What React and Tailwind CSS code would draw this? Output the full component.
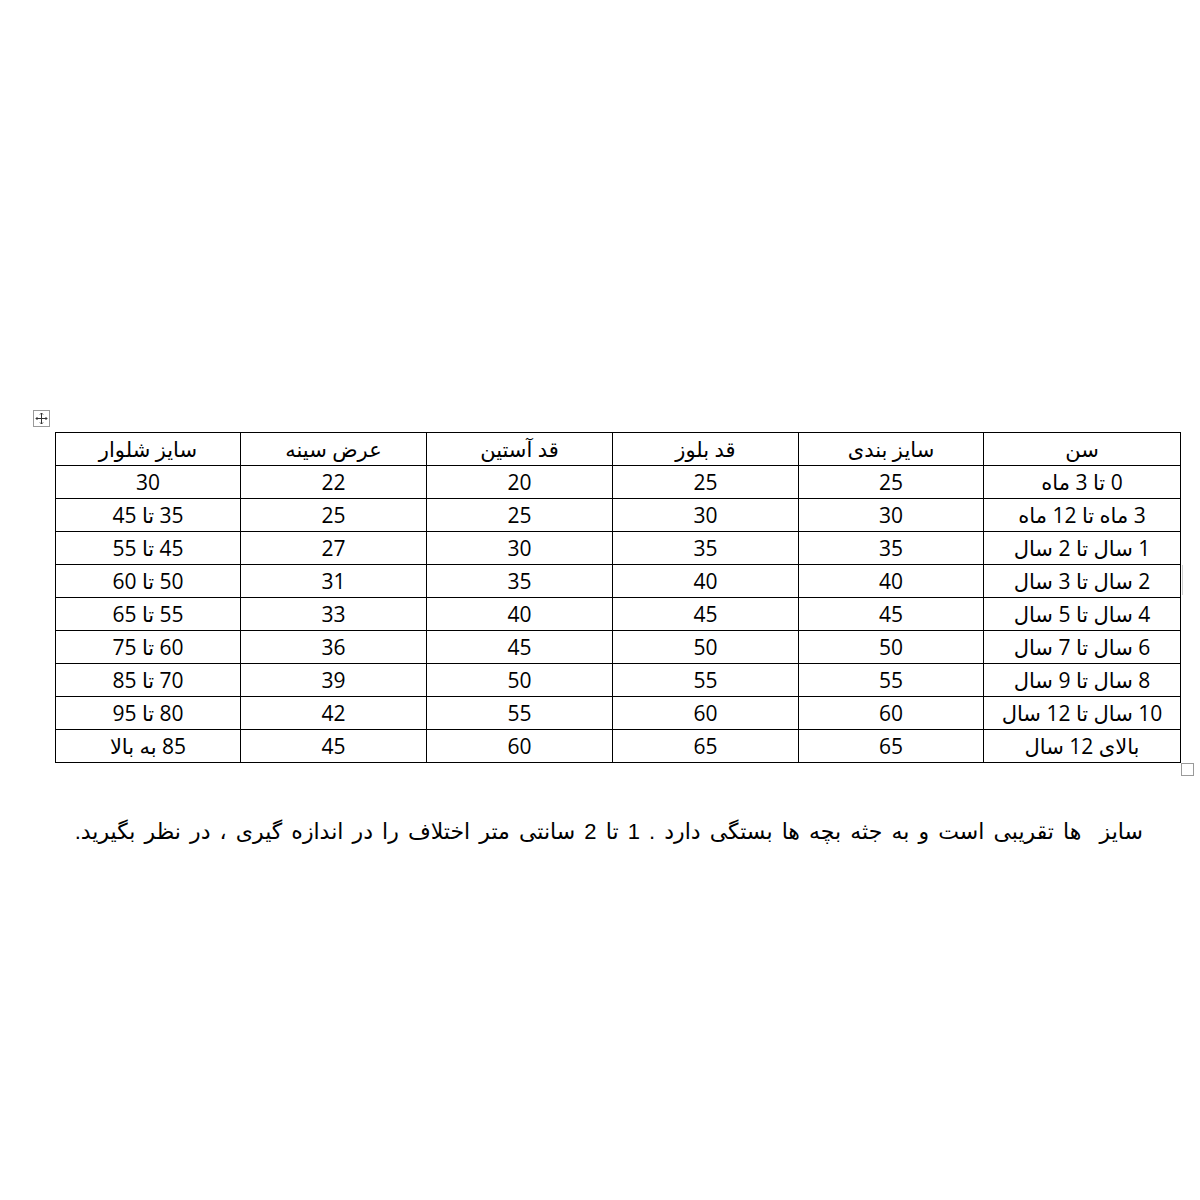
import React from "react";

const headers = ["سن", "سایز بندی", "قد بلوز", "قد آستین", "عرض سینه", "سایز شلوار"];
const rows = [
  ["0 تا 3 ماه", "25", "25", "20", "22", "30"],
  ["3 ماه تا 12 ماه", "30", "30", "25", "25", "35 تا 45"],
  ["1 سال تا 2 سال", "35", "35", "30", "27", "45 تا 55"],
  ["2 سال تا 3 سال", "40", "40", "35", "31", "50 تا 60"],
  ["4 سال تا 5 سال", "45", "45", "40", "33", "55 تا 65"],
  ["6 سال تا 7 سال", "50", "50", "45", "36", "60 تا 75"],
  ["8 سال تا 9 سال", "55", "55", "50", "39", "70 تا 85"],
  ["10 سال تا 12 سال", "60", "60", "55", "42", "80 تا 95"],
  ["بالای 12 سال", "65", "65", "60", "45", "85 به بالا"],
];
const widths = ["w-[197px]", "w-[185px]", "w-[186px]", "w-[186px]", "w-[186px]", "w-[185px]"];

export default function App() {
  return (
    <div
      className="w-[1200px] h-[1200px] bg-white text-black pt-[410px]"
      style={{ fontFamily: '"Open Sans", "DejaVu Sans", sans-serif' }}
    >
      <div className="ml-[33px] w-[17px] h-[17px] border border-[#9a9a9a] bg-white flex items-center justify-center">
        <svg width="13" height="13" viewBox="0 0 13 13" fill="none" stroke="#333" strokeWidth="1">
          <path d="M6.5 1 V12 M1 6.5 H12" />
          <path d="M5 2.5 L6.5 1 L8 2.5 M5 10.5 L6.5 12 L8 10.5 M2.5 5 L1 6.5 L2.5 8 M10.5 5 L12 6.5 L10.5 8" />
        </svg>
      </div>
      <div className="relative mt-[5px] ml-[55px] w-[1126px]">
        <table dir="rtl" className="border-collapse w-[1126px] table-fixed">
          <thead>
            <tr className="h-[33px]">
              {headers.map((h, i) => (
                <th
                  key={i}
                  className={`${widths[i]} border border-black font-normal text-[21px] leading-none text-center p-0`}
                >
                  {h}
                </th>
              ))}
            </tr>
          </thead>
          <tbody>
            {rows.map((r, ri) => (
              <tr key={ri} className="h-[33px]">
                {r.map((c, ci) => (
                  <td key={ci} className="border border-black text-[21px] leading-none text-center p-0">
                    {c}
                  </td>
                ))}
              </tr>
            ))}
          </tbody>
        </table>
        <div className="absolute left-[1127px] top-[133px] w-px h-[30px] bg-[#d0d0d0]" />
        <div className="absolute left-[1126px] top-[331px] w-[13px] h-[13px] border border-[#9a9a9a] bg-white" />
      </div>
      <p
        dir="rtl"
        className="mt-[58px] w-[1143px] text-right text-[22px] leading-none whitespace-pre [word-spacing:3px]"
        style={{ fontFamily: '"Liberation Sans", "DejaVu Sans", sans-serif' }}
      >
        سایز  ها تقریبی است و به جثه بچه ها بستگی دارد . 1 تا 2 سانتی متر اختلاف را در اندازه گیری ، در نظر بگیرید.
      </p>
    </div>
  );
}
